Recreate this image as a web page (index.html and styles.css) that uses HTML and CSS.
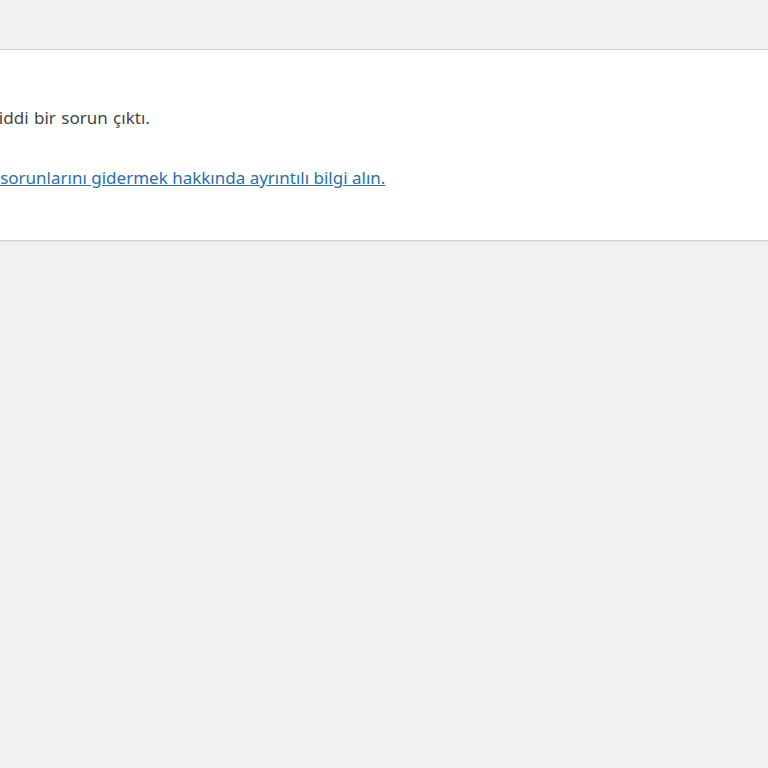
FILE: index.html
```html
<!DOCTYPE html>
<html lang="tr">
<head>
<meta charset="utf-8">
<title>WordPress › Hata</title>
<link rel="stylesheet" href="styles.css">
</head>
<body class="error-page">
  <div class="wp-die-message">
    <p class="message">Bu sitede ciddi bir sorun çıktı.</p>
    <p class="message"><a class="help-link" href="#">WordPress sorunlarını gidermek hakkında ayrıntılı bilgi alın.</a></p>
  </div>
</body>
</html>
```
FILE: styles.css
```css
html {
  background: #f1f1f1;
}

body.error-page {
  margin: 49px -60px 0 -125px;
  padding: 49px 34px 28px;
  background: #fff;
  border: 1px solid #d2d4d6;
  box-shadow: 0 1px 1px rgba(0, 0, 0, 0.04);
  color: #444;
  font-family: "Noto Sans", "Open Sans", sans-serif;
  font-size: 17px;
}

.wp-die-message {
  display: flex;
  flex-direction: column;
  gap: 34px;
}

.message {
  margin: 0;
  padding: 6px 0 0;
  line-height: 26px;
  white-space: nowrap;
}

.message:first-child {
  word-spacing: 1px;
}

.message:last-child {
  padding: 0 0 21px;
}

.help-link {
  color: #2b6ea8;
  text-decoration: underline;
}
```
